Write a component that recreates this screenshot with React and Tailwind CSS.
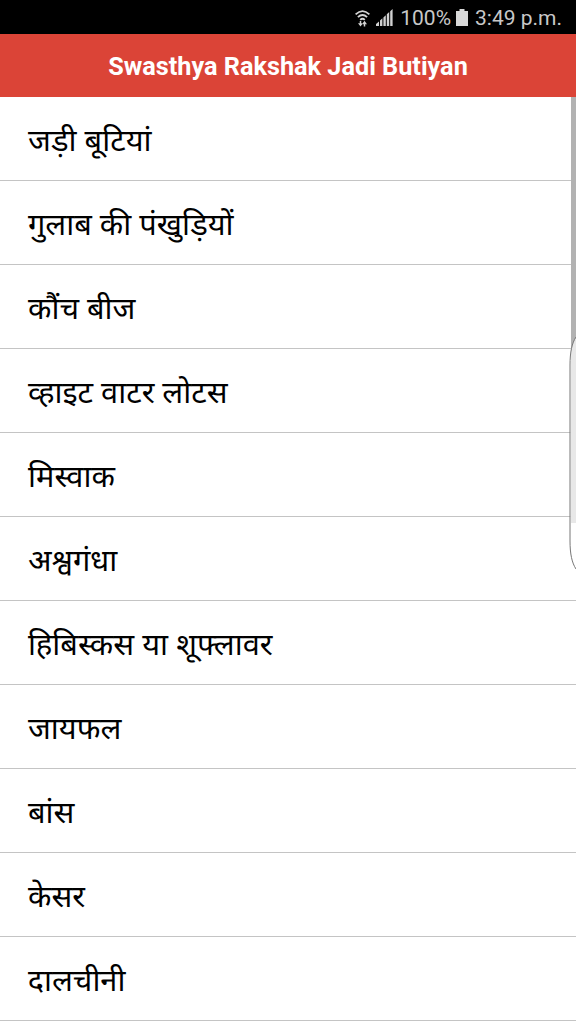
const items = [
  'जड़ी बूटियां',
  'गुलाब की पंखुड़ियों',
  'कौंच बीज',
  'व्हाइट वाटर लोटस',
  'मिस्वाक',
  'अश्वगंधा',
  'हिबिस्कस या शूफ्लावर',
  'जायफल',
  'बांस',
  'केसर',
  'दालचीनी',
];

function WifiIcon() {
  return (
    <svg width="15" height="17" viewBox="0 0 15 17" fill="none" stroke="#d4d4d4" strokeWidth="1.8">
      <path d="M.6 4.4Q7.5 -2.2 14.4 4.4" />
      <path d="M2.9 7.2Q7.5 2.8 12.1 7.2" />
      <path d="M5.2 9.8Q7.5 7.6 9.8 9.8" />
      <path d="M5.5 11v3M9.5 16.5v-3" strokeWidth="1.5" />
      <path d="M3 13.2h5L5.5 16.6zM7 14.2h5L9.5 10.8z" fill="#d4d4d4" stroke="none" />
    </svg>
  );
}

function SignalIcon() {
  return (
    <svg width="17" height="17" viewBox="0 0 17 17" fill="#d0d0d0">
      <path d="M0 17v-2l3-2.5V17zM4 17v-5.6l2.4-2.1V17zM7.4 17V8.4l2.4-2.2V17zM10.8 17V5.2L13.2 3v14zM14.2 17V2.2L16.6 0v17z" />
    </svg>
  );
}

function BatteryIcon() {
  return (
    <svg width="12" height="17" viewBox="0 0 12 17" fill="#d8d8d8">
      <path d="M3.5 0h5v2H12v15H0V2h3.5z" />
    </svg>
  );
}

export default function App() {
  return (
    <div className="relative h-[1024px] w-[576px] overflow-hidden bg-white font-['Roboto','Noto_Sans',sans-serif]">
      <div className="flex h-[34px] items-center justify-end bg-black pr-[14px] pt-[3px] text-[21px] text-[#c8c8c8]">
        <WifiIcon />
        <span className="ml-[6px] mr-[7px] flex pb-[2px]"><SignalIcon /></span>
        <span>100%</span>
        <span className="ml-[5px] mr-[7px] flex pb-[3px]"><BatteryIcon /></span>
        <span>3:49 p.m.</span>
      </div>
      <header className="flex h-[63px] items-center justify-center bg-[#db4437] pt-[2px] text-[25.25px] font-bold text-white">
        <h1>Swasthya Rakshak Jadi Butiyan</h1>
      </header>
      <ul lang="hi">
        {items.map((text) => (
          <li
            key={text}
            className="flex h-[84px] items-center border-b border-[#c4c4c4] pl-7 pt-[2px] font-['Noto_Sans_Devanagari_UI','Noto_Sans',sans-serif] text-[30.8px] text-black"
          >
            {text}
          </li>
        ))}
      </ul>
      <div className="absolute right-0 top-[97px] h-[426px] w-[5px] bg-[#b2b2b2]" />
      <svg className="absolute right-0 top-[335px]" width="8" height="236" viewBox="0 0 8 236">
        <path d="M8 2C4 8 2 17 2 30V206C2 219 4 228 8 234Z" fill="#fff" fillOpacity=".7" />
        <path d="M8 2C4 8 2 17 2 30V206C2 219 4 228 8 234" fill="none" stroke="#777" strokeWidth="1" />
      </svg>
    </div>
  );
}
